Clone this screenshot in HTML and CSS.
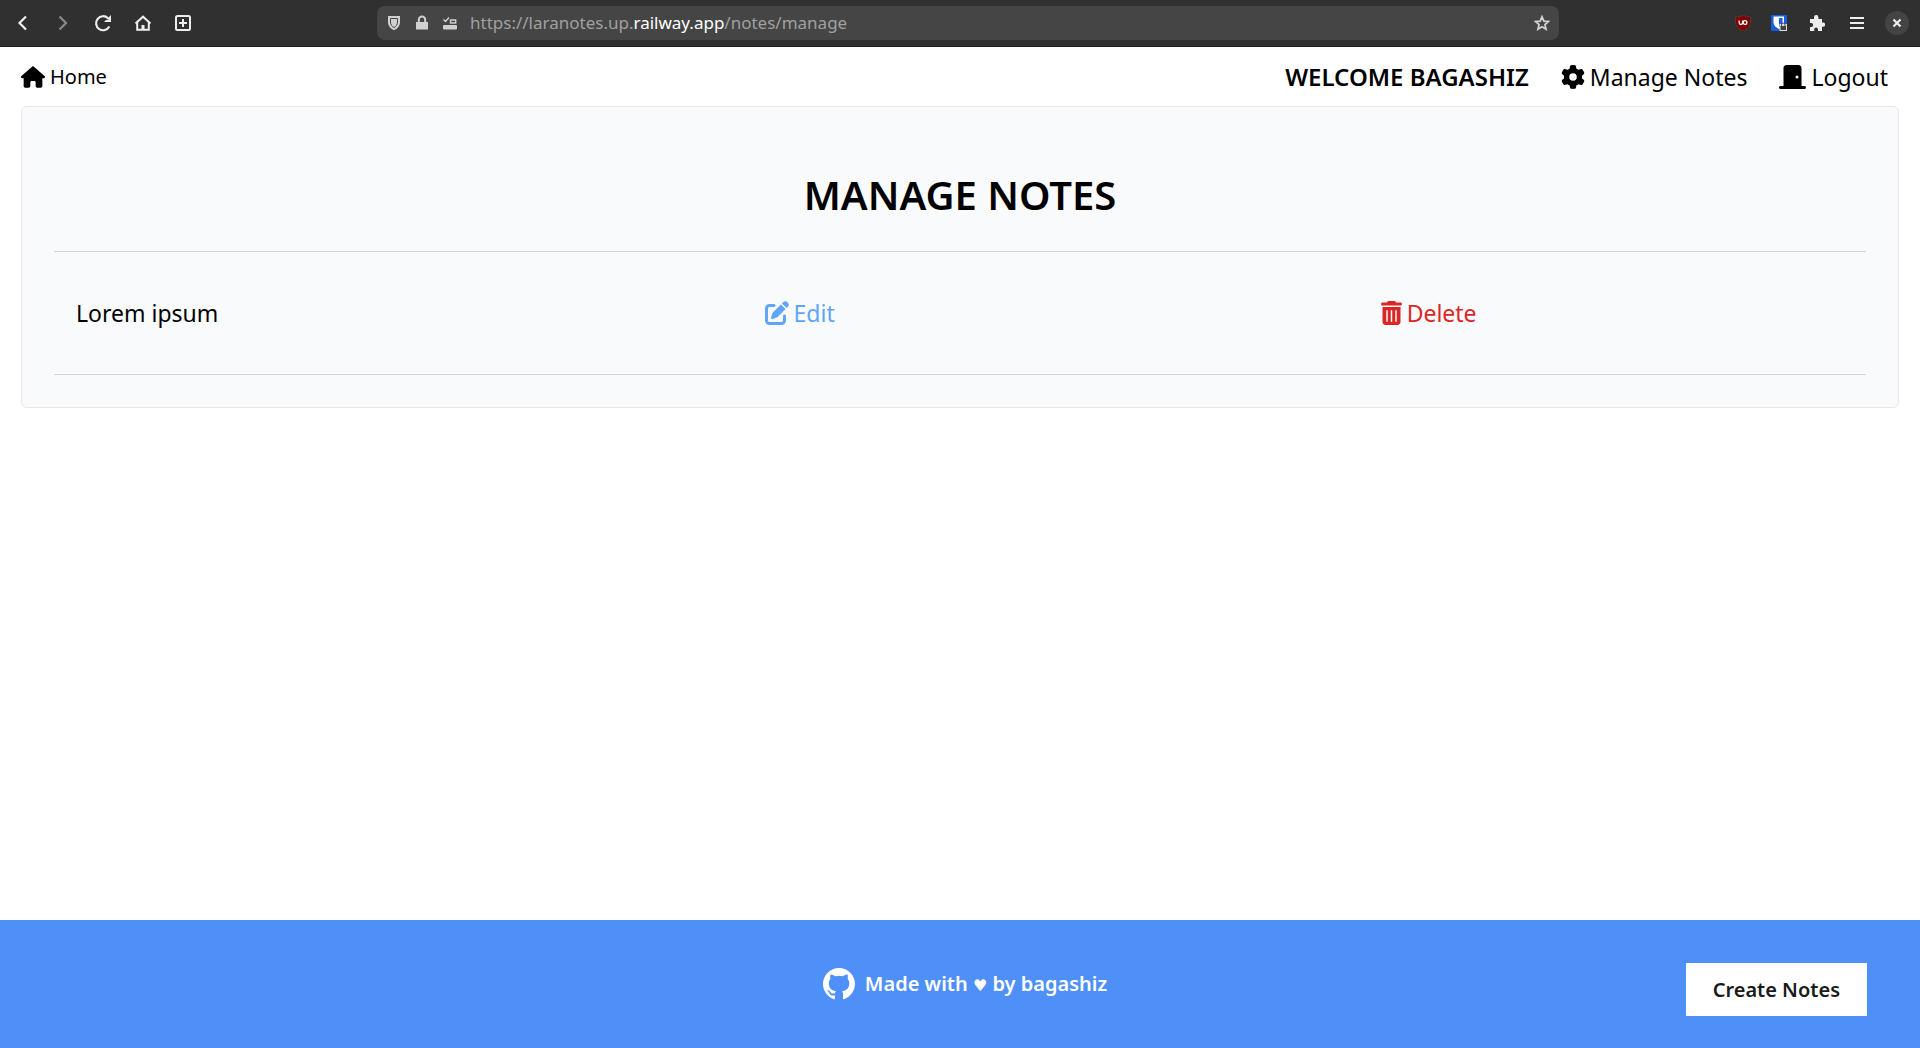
FILE: index.html
```html
<!DOCTYPE html>
<html lang="en">
<head>
<meta charset="utf-8">
<meta name="viewport" content="width=device-width, initial-scale=1">
<title>Manage Notes</title>
<link rel="stylesheet" href="styles.css">
</head>
<body>
<div class="browser">
  <div class="browser-left">
    <button class="tool" type="button" aria-label="Back"><svg width="24" height="24" viewBox="0 0 24 24"><path d="M15 5.500 8.500 12l6.500 6.500" fill="none" stroke="currentColor" stroke-width="2.200"/></svg></button>
    <button class="tool tool-off" type="button" aria-label="Forward"><svg width="24" height="24" viewBox="0 0 24 24"><path d="m8.500 5.500 6.500 6.500-6.500 6.500" fill="none" stroke="currentColor" stroke-width="2.200"/></svg></button>
    <button class="tool" type="button" aria-label="Reload"><svg width="24" height="24" viewBox="0 0 24 24"><path d="M18.300 15.500A7 7 0 1 1 17 7.200l1 1" fill="none" stroke="currentColor" stroke-width="2.200"/><path d="M20 4v7h-7l2-2h3V6z" fill="currentColor"/></svg></button>
    <button class="tool" type="button" aria-label="Home page"><svg width="24" height="24" viewBox="0 0 24 24"><path d="M4.500 12.500 12 5.700l7.500 6.800M6.200 11v7.800h11.600V11" fill="none" stroke="currentColor" stroke-width="2"/><path d="M10.500 14h3v5h-3z" fill="currentColor"/></svg></button>
    <button class="tool" type="button" aria-label="New tab"><svg width="24" height="24" viewBox="0 0 24 24"><rect x="5" y="5" width="14" height="14" rx="1.500" fill="none" stroke="currentColor" stroke-width="2"/><path d="M12 8v8M8 12h8" stroke="currentColor" stroke-width="2"/></svg></button>
  </div>
  <div class="address">
    <svg width="16" height="16" viewBox="0 0 16 16"><path d="M2 1h12v6c0 4-2.500 6.800-6 8.200C4.500 13.800 2 11 2 7z" fill="currentColor"/><path d="M4.500 3.500h7V7c0 2.600-1.400 4.500-3.500 5.600C5.900 11.500 4.500 9.600 4.500 7z" fill="none" stroke="#454545"/></svg>
    <svg width="16" height="16" viewBox="0 0 16 16"><path d="M2 7h12v7.500H2z" fill="currentColor"/><path d="M4.800 8V4.800a3.200 3.200 0 0 1 6.400 0V8" fill="none" stroke="currentColor" stroke-width="2"/></svg>
    <svg width="16" height="16" viewBox="0 0 16 16"><path d="m1.500 4.500 2 2L7 2.500M8.500 5h5.200v3H8.500z" fill="none" stroke="currentColor" stroke-width="1.400"/><rect x="1" y="10" width="14" height="4.500" rx="1" fill="currentColor"/></svg>
    <span class="url">https://laranotes.up.<span class="url-host">railway.app</span>/notes/manage</span>
    <svg width="16" height="16" viewBox="0 0 16 16"><path d="m8 1.800 1.900 4.300 4.500.4-3.400 3.100 1 4.500L8 11.700l-4 2.400 1-4.500L1.600 6.500l4.500-.4z" fill="none" stroke="currentColor" stroke-width="1.800"/></svg>
  </div>
  <div class="browser-right">
    <button class="tool tool-small" type="button" aria-label="uBlock"><svg width="16" height="16" viewBox="0 0 16 16"><path d="M8 0c2.500 1.500 4.500 2 7.500 2v5c0 4.500-3 7-7.500 9C3.500 14 .5 11.500.5 7V2C3.500 2 5.500 1.500 8 0z" fill="#800000" stroke="#5c4a4a" stroke-width=".6"/><path d="M4.200 5.500v2.300a1.700 1.700 0 0 0 3.400 0V5.500" fill="none" stroke="#fff" stroke-width="1.300"/><circle cx="10" cy="7.500" r="1.900" fill="none" stroke="#fff" stroke-width="1.300"/></svg></button>
    <button class="tool tool-small" type="button" aria-label="Passwords"><svg width="16" height="16" viewBox="0 0 16 16"><rect width="16" height="16" rx="1" fill="#175ddc"/><path d="M2.500 1.500h10.500v6c0 3.500-2.500 5-5 6.500-3-1.500-5.500-3.500-5.500-6.500z" fill="#fff"/><path d="M8 3h3.500v5c0 2-1.500 3-3.500 4z" fill="#175ddc"/><path d="M8.500 9h7.500v7H8.500z" fill="#ddd"/><path d="M9.500 11h5.500v4H9.500z" fill="#444"/><path d="M10.500 11V9.800a1.700 1.700 0 0 1 3.500 0V11" fill="none" stroke="#444"/></svg></button>
    <button class="tool" type="button" aria-label="Extensions"><svg width="16" height="16" viewBox="0 0 16 16"><path d="M1 4h4V2.300a2.200 2.200 0 0 1 4.400 0V4H13v3.500h1a2.100 2.100 0 0 1 0 4.200h-1V16H9v-1.500a1.900 1.900 0 0 0-3.800 0V16H1v-4h1.200a2 2 0 0 0 0-4H1z" fill="currentColor"/></svg></button>
    <button class="tool" type="button" aria-label="Menu"><svg width="16" height="16" viewBox="0 0 16 16"><path d="M1 3h14M1 8h14M1 13h14" stroke="currentColor" stroke-width="2"/></svg></button>
    <button class="tool" type="button" aria-label="Close"><svg width="24" height="24" viewBox="0 0 24 24"><circle cx="12" cy="12" r="12" fill="#444"/><path d="m8.500 8.500 7 7m0-7-7 7" stroke="currentColor" stroke-width="2.200"/></svg></button>
  </div>
</div>

<nav class="nav">
  <a class="link link-home" href="#"><svg width="24" height="22" viewBox="0 0 576 512"><path fill="currentColor" d="M575.800 255.500c0 18-15 32.100-32 32.100h-32l.7 160.200c0 2.700-.2 5.400-.5 8.100V472c0 22.100-17.900 40-40 40H456c-1.100 0-2.200 0-3.300-.1-1.400.1-2.800.1-4.200.1H392c-22.100 0-40-17.900-40-40v-88c0-17.700-14.300-32-32-32h-64c-17.700 0-32 14.300-32 32v88c0 22.100-17.900 40-40 40h-55.900c-1.500 0-3-.1-4.500-.2-1.200.1-2.400.2-3.600.2h-16c-22.100 0-40-17.900-40-40V360c0-.9 0-1.900.1-2.800v-69.600H32c-18 0-32-14-32-32.100 0-9 3-17 10-24L266.400 8c7-7 15-8 22-8s15 2 21 7l255.400 224.500c8 7 12 15 11 24z"/></svg>Home</a>
  <ul class="menu">
    <li class="welcome">WELCOME BAGASHIZ</li>
    <li><a class="link" href="#"><svg width="24" height="24" viewBox="0 0 512 512"><path fill="currentColor" d="M495.900 166.600c3.200 8.700.5 18.400-6.400 24.600l-43.300 39.400c1.100 8.300 1.700 16.800 1.700 25.400s-.6 17.100-1.700 25.400l43.300 39.400c6.900 6.200 9.600 15.900 6.400 24.600-4.400 11.900-9.700 23.300-15.800 34.300l-4.700 8.100c-6.600 11-14 21.400-22.100 31.200-5.900 7.200-15.700 9.600-24.500 6.800l-55.700-17.700c-13.400 10.300-28.200 18.900-44 25.400l-12.500 57.100c-2 9.100-9 16.300-18.200 17.800-13.800 2.300-28 3.500-42.500 3.500s-28.700-1.200-42.500-3.500c-9.200-1.500-16.200-8.700-18.200-17.800l-12.500-57.100c-15.800-6.500-30.600-15.100-44-25.400l-55.600 17.800c-8.800 2.800-18.600.3-24.500-6.800-8.100-9.800-15.500-20.200-22.100-31.200l-4.700-8.100c-6.100-11-11.400-22.400-15.800-34.300-3.200-8.700-.5-18.400 6.400-24.600l43.300-39.400c-1.100-8.400-1.700-16.900-1.700-25.500s.6-17.100 1.700-25.400l-43.300-39.400c-6.900-6.200-9.600-15.900-6.400-24.600 4.400-11.900 9.700-23.300 15.800-34.300l4.700-8.100c6.600-11 14-21.400 22.100-31.200 5.900-7.200 15.700-9.600 24.500-6.800l55.700 17.700c13.400-10.300 28.200-18.900 44-25.400l12.500-57.100c2-9.100 9-16.300 18.200-17.800C227.300 1.200 241.500 0 256 0s28.700 1.200 42.500 3.500c9.200 1.500 16.200 8.700 18.200 17.800l12.500 57.100c15.800 6.500 30.600 15.100 44 25.400l55.700-17.700c8.800-2.800 18.600-.3 24.500 6.800 8.100 9.800 15.500 20.200 22.100 31.200l4.700 8.100c6.100 11 11.400 22.400 15.800 34.300zM256 336a80 80 0 1 0 0-160 80 80 0 1 0 0 160z"/></svg>Manage Notes</a></li>
    <li><button class="link" type="button"><svg width="27" height="24" viewBox="0 0 576 512"><path fill="currentColor" d="M96 64c0-35.300 28.700-64 64-64h256c35.300 0 64 28.700 64 64v384h64c17.700 0 32 14.300 32 32s-14.300 32-32 32H32c-17.700 0-32-14.300-32-32s14.300-32 32-32h64V64zm288 224a32 32 0 1 0 0-64 32 32 0 1 0 0 64z"/></svg>Logout</button></li>
  </ul>
</nav>

<main class="card">
  <h1 class="title">MANAGE NOTES</h1>
  <table class="notes">
    <tbody>
      <tr>
        <td class="note-name">Lorem ipsum</td>
        <td class="note-edit"><a class="link link-edit" href="#"><svg width="24" height="24" viewBox="0 0 512 512"><path fill="currentColor" d="M471.600 21.400c-21.900-21.900-57.300-21.900-79.200 0l-30.100 30 97.900 97.900 30.100-30.100c21.900-21.900 21.900-57.300 0-79.200l-18.700-18.600zm-299.200 220c-6.100 6.100-10.800 13.600-13.500 21.900l-29.600 88.800c-2.900 8.600-.6 18.100 5.800 24.600s15.900 8.700 24.600 5.800l88.800-29.600c8.200-2.700 15.700-7.400 21.900-13.500l167.300-167.400-98-98-167.300 167.400zM96 64c-53 0-96 43-96 96v256c0 53 43 96 96 96h256c53 0 96-43 96-96v-96c0-17.700-14.300-32-32-32s-32 14.300-32 32v96c0 17.700-14.300 32-32 32H96c-17.700 0-32-14.300-32-32V160c0-17.700 14.300-32 32-32h96c17.700 0 32-14.300 32-32s-14.300-32-32-32H96z"/></svg>Edit</a></td>
        <td><button class="link link-delete" type="button"><svg width="21" height="24" viewBox="0 0 448 512"><path fill="currentColor" d="M135.200 17.700C140.600 6.800 151.700 0 163.800 0h120.400c12.100 0 23.200 6.800 28.600 17.700L320 32h96c17.700 0 32 14.300 32 32s-14.300 32-32 32H32C14.300 96 0 81.700 0 64s14.300-32 32-32h96l7.200-14.300zM32 128h384v320c0 35.300-28.700 64-64 64H96c-35.300 0-64-28.700-64-64V128zm96 64c-8.800 0-16 7.200-16 16v224c0 8.800 7.200 16 16 16s16-7.200 16-16V208c0-8.800-7.200-16-16-16zm96 0c-8.800 0-16 7.200-16 16v224c0 8.800 7.200 16 16 16s16-7.200 16-16V208c0-8.800-7.200-16-16-16zm96 0c-8.800 0-16 7.200-16 16v224c0 8.800 7.200 16 16 16s16-7.200 16-16V208c0-8.800-7.200-16-16-16z"/></svg>Delete</button></td>
      </tr>
    </tbody>
  </table>
</main>

<footer class="footer">
  <a class="credit" href="#"><svg width="32" height="32" viewBox="0 0 16 16"><path fill="currentColor" d="M8 0C3.580 0 0 3.580 0 8c0 3.540 2.290 6.530 5.470 7.590.4.070.55-.17.55-.38 0-.19-.01-.82-.01-1.490-2.010.37-2.530-.49-2.690-.94-.09-.23-.48-.94-.82-1.130-.28-.15-.68-.52-.01-.53.63-.01 1.080.58 1.230.82.72 1.210 1.870.87 2.330.66.07-.52.28-.87.51-1.070-1.780-.2-3.640-.89-3.640-3.950 0-.87.31-1.590.82-2.150-.08-.2-.36-1.020.08-2.120 0 0 .67-.21 2.200.82.64-.18 1.320-.27 2-.27s1.360.09 2 .27c1.530-1.040 2.200-.82 2.200-.82.44 1.100.16 1.920.08 2.120.51.56.82 1.270.82 2.150 0 3.070-1.870 3.750-3.650 3.950.29.25.54.73.54 1.480 0 1.070-.01 1.930-.01 2.200 0 .21.15.46.55.38A8.010 8.010 0 0 0 16 8c0-4.420-3.580-8-8-8z"/></svg><span>Made with <span class="heart">♥</span> by bagashiz</span></a>
  <a class="create" href="#">Create Notes</a>
</footer>
</body>
</html>
```
FILE: styles.css
```css
* {
  box-sizing: border-box;
}

body {
  margin: 0;
  min-height: 100vh;
  display: flex;
  flex-direction: column;
  background: #fff;
  color: #000;
  font-family: "Noto Sans", "DejaVu Sans", sans-serif;
  font-size: 23px;
  line-height: 32px;
}

svg {
  display: block;
  flex: none;
}

button {
  border: 0;
  padding: 0;
  background: none;
  color: inherit;
  font: inherit;
  cursor: pointer;
}

.browser {
  display: grid;
  grid-template-columns: 377fr 1182fr 361fr;
  align-items: center;
  height: 47px;
  border-bottom: 1px solid #1c1c1c;
  background: #303030;
  color: #eee;
}

.browser-left,
.browser-right {
  display: flex;
  align-items: center;
}

.browser-left {
  padding-left: 3px;
}

.browser-right {
  justify-content: flex-end;
  padding-right: 3px;
}

.tool {
  display: flex;
  align-items: center;
  justify-content: center;
  width: 40px;
  height: 34px;
}

.tool-small {
  width: 36px;
}

.tool-off {
  color: #888;
}

.address {
  display: flex;
  align-items: center;
  gap: 12px;
  height: 34px;
  padding: 0 9px;
  border-radius: 8px;
  background: #454545;
  color: #d0d0d0;
}

.url {
  flex: 1;
  color: #a0a0a0;
  font-size: 17px;
  line-height: 24px;
}

.url-host {
  color: #fff;
}

.nav {
  display: flex;
  align-items: center;
  justify-content: space-between;
  height: 59px;
  padding: 0 32px 0 21px;
}

.menu {
  display: flex;
  gap: 32px;
  margin: 0;
  padding: 0;
  list-style: none;
}

.menu li {
  display: flex;
  align-items: center;
}

.welcome {
  font-size: 24px;
  font-weight: 600;
}

.link {
  display: flex;
  align-items: center;
  gap: 5px;
  color: inherit;
  text-decoration: none;
}

.link-home {
  font-size: 20px;
}

.link-edit {
  color: #60a5fa;
}

.link-delete {
  color: #dc2626;
}

.card {
  margin: 0 21px;
  padding: 64px 32px 32px;
  border: 1px solid #e5e7eb;
  border-radius: 6px;
  background: #f9fafc;
}

.title {
  margin: 0 0 32px;
  font-size: 40px;
  font-weight: 600;
  line-height: 48px;
  text-align: center;
}

.notes {
  width: 100%;
  border-collapse: collapse;
  border-top: 1px solid #d1d5db;
  border-bottom: 1px solid #d1d5db;
}

.notes td {
  height: 123px;
  padding: 0 22px;
  vertical-align: middle;
}

.note-name {
  width: 38%;
}

.note-edit {
  width: 34%;
}

.footer {
  display: grid;
  grid-template-columns: 1fr auto 1fr;
  align-items: center;
  height: 128px;
  margin-top: auto;
  padding: 0 53px 0 63px;
  background: #4f8ff8;
  font-size: 20px;
  font-weight: 600;
}

.credit {
  grid-column: 2;
  display: flex;
  align-items: center;
  gap: 10px;
  color: #fff;
  text-decoration: none;
}

.heart {
  font-size: 16px;
}

.create {
  justify-self: end;
  margin-top: 11px;
  padding: 11px 27px 10px;
  background: #fff;
  color: #1a1a1a;
  text-decoration: none;
}
```
